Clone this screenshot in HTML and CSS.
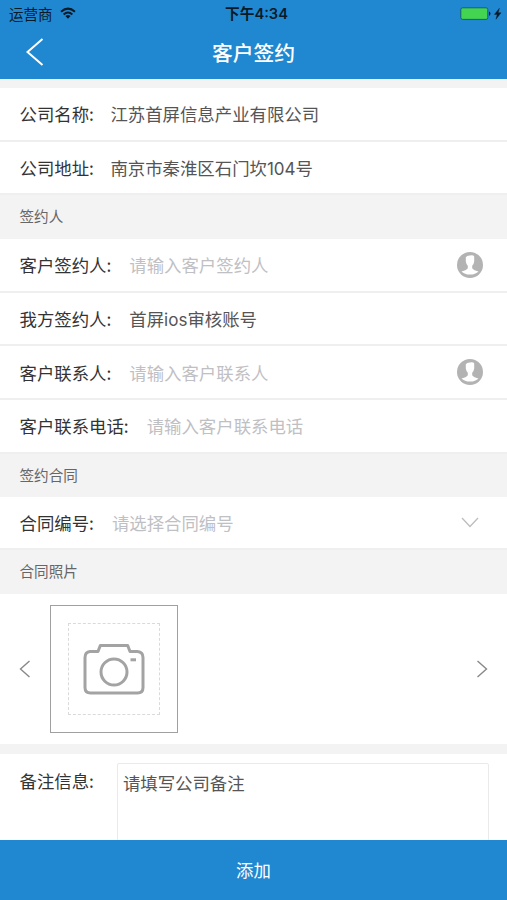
FILE: index.html
```html
<!DOCTYPE html>
<html lang="zh-CN">
<head>
<meta charset="utf-8">
<title>客户签约</title>
<link rel="stylesheet" href="styles.css">
</head>
<body>
<div class="app">
  <header class="header">
    <div class="status">
      <div class="carrier">
        <span>运营商</span>
        <svg class="wifi" width="16" height="12" viewBox="0 0 16 12" fill="none" stroke="#0b1a28" stroke-width="2"><path d="M1 4.7Q8-1.5 15 4.7M3.6 7.4Q8 3.6 12.4 7.4"/><path d="M5.4 9.1Q8 7 10.6 9.1L8 11.7z" fill="#0b1a28" stroke="none"/></svg>
      </div>
      <div class="time">下午4:34</div>
      <div class="power">
        <svg width="42" height="14" viewBox="0 0 42 14"><rect x=".8" y=".8" width="27" height="11.6" rx="1.8" fill="#43d551" stroke="#145f72"/><path d="M29 4.8h.8q1.5 1.8 0 3.6H29z" fill="#0b1a28"/><path d="M39.4 1.3 34.4 7.4H37.2L36 12.2 41 5.800H38.100z" fill="#0b1a28" stroke="#0b1a28" stroke-width=".4"/></svg>
      </div>
    </div>
    <div class="nav">
      <svg class="back" width="18" height="28" viewBox="0 0 18 28" fill="none" stroke="#fff" stroke-width="2"><path d="M16.500 1 1.500 14 16.500 27"/></svg>
      <h1 class="title">客户签约</h1>
    </div>
  </header>

  <main class="content">
    <div class="row"><span class="label">公司名称:</span><span class="value">江苏首屏信息产业有限公司</span></div>
    <div class="row"><span class="label">公司地址:</span><span class="value">南京市秦淮区石门坎<span class="latin">104</span>号</span></div>
    <h2 class="section">签约人</h2>
    <div class="row medium">
      <span class="label">客户签约人:</span><span class="value hint">请输入客户签约人</span>
      <svg class="person" width="26" height="26" viewBox="0 0 26 26"><circle cx="13" cy="13" r="13" fill="#b3b3b3"/><path d="M8.800 5.200Q10 3.200 13 3.400 16.500 2.800 17.200 4.500V9.500Q16.800 12.200 15.200 13.800V16.200Q16 17.900 21.500 19.500 18.500 22.600 13 22.600T4.500 19.500Q10 17.900 10.800 16.200V13.800Q9.200 12.200 8.800 9.500z" fill="#fff"/></svg>
    </div>
    <div class="row medium"><span class="label">我方签约人:</span><span class="value">首屏<span class="latin">ios</span>审核账号</span></div>
    <div class="row medium">
      <span class="label">客户联系人:</span><span class="value hint">请输入客户联系人</span>
      <svg class="person" width="26" height="26" viewBox="0 0 26 26"><circle cx="13" cy="13" r="13" fill="#b3b3b3"/><path d="M8.800 5.200Q10 3.200 13 3.400 16.500 2.800 17.200 4.500V9.500Q16.800 12.200 15.200 13.800V16.200Q16 17.900 21.500 19.500 18.500 22.600 13 22.600T4.500 19.500Q10 17.900 10.800 16.200V13.800Q9.200 12.200 8.800 9.500z" fill="#fff"/></svg>
    </div>
    <div class="row medium"><span class="label">客户联系电话:</span><span class="value hint">请输入客户联系电话</span></div>
    <h2 class="section short">签约合同</h2>
    <div class="row select">
      <span class="label">合同编号:</span><span class="value hint">请选择合同编号</span>
      <svg class="chevron" width="18" height="11" viewBox="0 0 18 11" fill="none" stroke="#bdbdbd" stroke-width="1.3"><path d="M1 1 9 9.500 17 1"/></svg>
    </div>
    <h2 class="section">合同照片</h2>
    <div class="photos">
      <svg width="12" height="18" viewBox="0 0 12 18" fill="none" stroke="#888" stroke-width="1.400"><path d="M10.500 1 1.500 9 10.500 17"/></svg>
      <div class="frame">
        <div class="slot">
          <svg width="62" height="52" viewBox="0 0 62 52" fill="none" stroke="#a3a3a3" stroke-width="3"><path d="M7 8.500H15L17.300 2.500H44.700L47 8.500H54.500Q60 9 60 14.500V44.500Q60 50 54.500 50H7.500Q2 50 2 44.500V14.500Q2 9 7 8.500z" stroke-linejoin="round"/><circle cx="31" cy="29" r="13"/><path d="M47.500 16.800h5.500"/></svg>
        </div>
      </div>
      <svg class="next" width="12" height="18" viewBox="0 0 12 18" fill="none" stroke="#888" stroke-width="1.400"><path d="M1.500 1 10.500 9 1.500 17"/></svg>
    </div>
    <div class="remarks">
      <span class="label">备注信息:</span>
      <div class="note">请填写公司备注</div>
    </div>
  </main>
  <footer class="footer">添加</footer>
</div>
</body>
</html>
```

FILE: styles.css
```css
* { box-sizing: border-box; }
body {
  margin: 0;
  font-family: "Noto Sans CJK SC", sans-serif;
  font-size: 17.4px;
  color: #333;
}
svg { display: block; flex: none; }
.app {
  width: 507px;
  height: 900px;
  display: flex;
  flex-direction: column;
  overflow: hidden;
  background: #fff;
}
.header {
  height: 79px;
  flex: none;
  background: #2088d1;
}
.status {
  height: 27px;
  padding: 0 5px 0 9px;
  display: grid;
  grid-template-columns: 1fr auto 1fr;
  align-items: center;
  font-size: 14.5px;
  line-height: 26px;
  color: #0b1a28;
}
.carrier { display: flex; align-items: center; gap: 7px; }
.wifi { margin-top: -2px; }
.time {
  font-family: Inter, "Noto Sans CJK SC", sans-serif;
  font-size: 14.7px;
  font-weight: 600;
  margin-left: 2px;
}
.power { justify-self: end; }
.nav {
  height: 50px;
  padding: 0 26px;
  display: grid;
  grid-template-columns: 1fr auto 1fr;
  align-items: center;
}
.title {
  margin: 0;
  font-size: 20.8px;
  font-weight: 500;
  line-height: 50px;
  color: #fff;
}
.content {
  flex: 1;
  min-height: 0;
  overflow: hidden;
  border-top: 9px solid #f3f3f3;
}
.row {
  height: 53.5px;
  padding: 0 24px 0 19.5px;
  display: flex;
  align-items: center;
  border-bottom: 2px solid #efefef;
  white-space: nowrap;
}
.medium { height: 53.7px; }
.label { flex: none; }
.value { margin-left: 16.5px; color: #555; }
.medium .value { margin-left: 18px; }
.select .value { margin-left: 18px; }
.row .hint { color: #bfc0c4; }
.latin { font-family: Inter, sans-serif; font-size: 17px; }
.person, .chevron { margin-left: auto; }
.chevron { margin-right: 4px; }
.section {
  height: 44px;
  margin: 0;
  padding-left: 19.5px;
  background: #f3f3f3;
  font-size: 14.6px;
  font-weight: 400;
  line-height: 42px;
  color: #666;
}
.short { height: 43px; }
.photos {
  height: 150px;
  padding: 0 19px 1px;
  display: flex;
  align-items: center;
}
.frame {
  width: 128px;
  height: 128px;
  margin-left: 19px;
  display: grid;
  place-items: center;
  border: 1.5px solid #a0a0a0;
}
.slot {
  width: 92px;
  height: 92px;
  display: grid;
  place-items: center;
  border: 1px dashed #dadada;
}
.next { margin-left: auto; }
.remarks {
  height: 110px;
  padding: 9px 18px 0 19.5px;
  display: flex;
  align-items: flex-start;
  border-top: 10px solid #f3f3f3;
}
.remarks .label { line-height: 36px; }
.note {
  flex: 1;
  height: 120px;
  margin-left: 23px;
  padding-left: 5px;
  border: 1.5px solid #eaeaea;
  border-radius: 2px;
  line-height: 37px;
  color: #555;
}
.footer {
  height: 60px;
  flex: none;
  background: #2088d1;
  color: #fff;
  text-align: center;
  line-height: 59px;
}
```
